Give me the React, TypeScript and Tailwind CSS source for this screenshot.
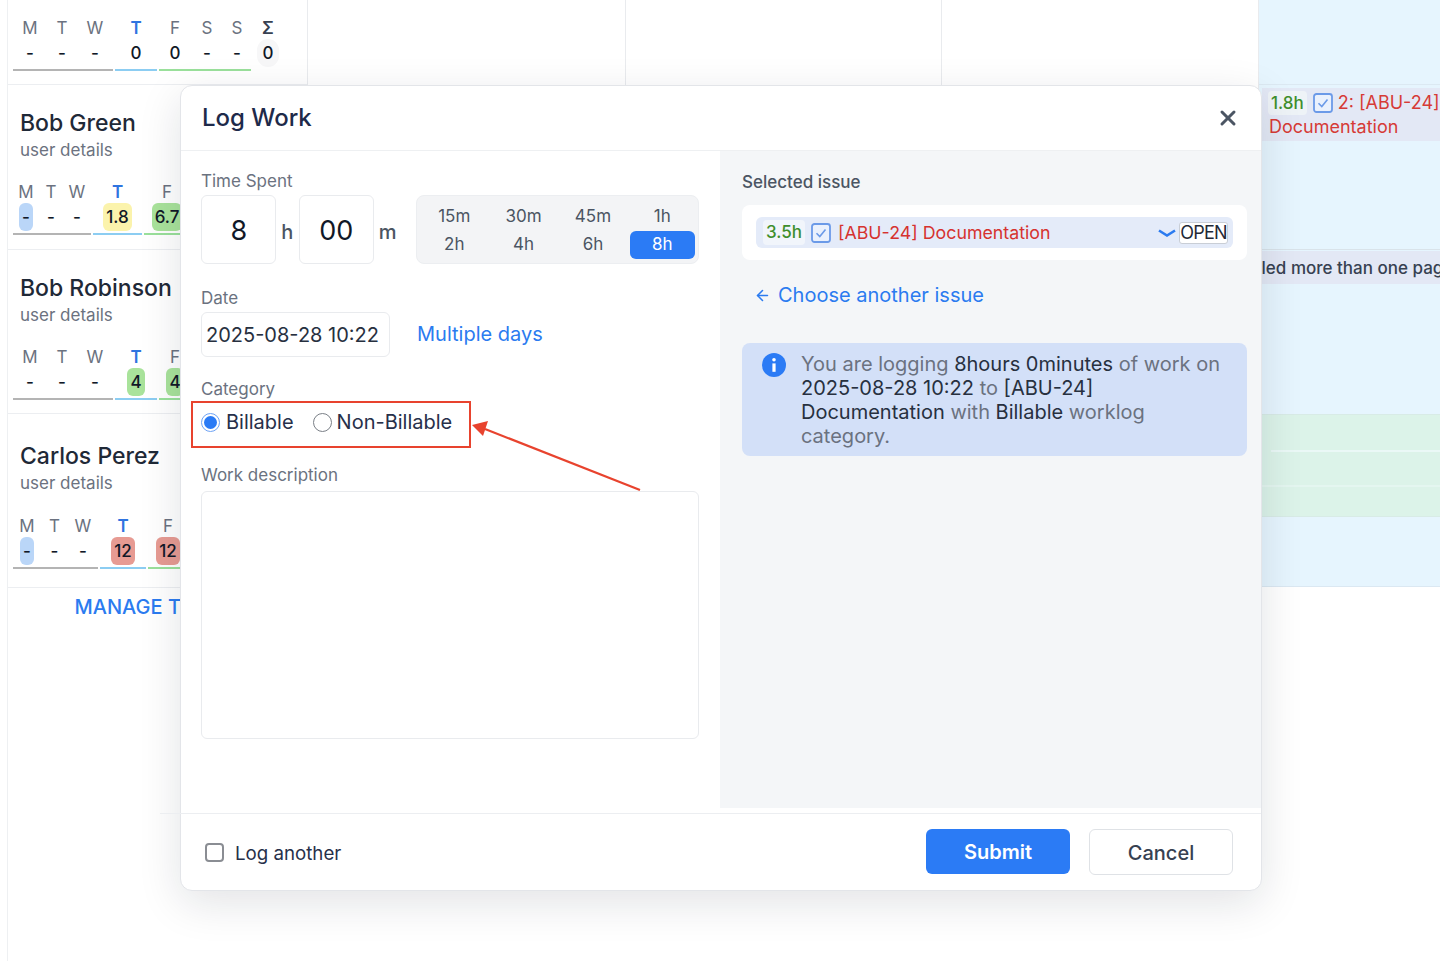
import React from 'react';
import { ArrowLeft, X } from 'lucide-react';

type Cell = { label: string; value: string; width: number; chip?: string };
type Group = { line: string; width: number; cells: Cell[]; today?: boolean };

const GRAY = 'border-[#b4b4b4]';
const BLUE = 'border-[#8ccdf2]';
const GREEN = 'border-[#9ae09b]';

const startOfWeek: Group = {
  line: GRAY,
  width: 100,
  cells: [
    { label: 'M', value: '-', width: 34 },
    { label: 'T', value: '-', width: 30 },
    { label: 'W', value: '-', width: 36 },
  ],
};

const WeekRow = ({ groups, total }: { groups: Group[]; total?: string }) => (
  <div className="flex items-start">
    <div className="flex gap-[2px]">
      {groups.map((group, i) => (
        <div key={i} className={`border-b-2 ${group.line} pb-[2px]`} style={{ width: group.width }}>
          <div className="flex">
            {group.cells.map((cell, j) => (
              <div key={j} className="flex flex-col items-center" style={{ width: cell.width }}>
                <span
                  className={
                    group.today
                      ? 'h-5 text-[17px] leading-5 font-semibold text-[#2f74e0]'
                      : 'h-5 text-[17px] leading-5 text-[#6b7280]'
                  }
                >
                  {cell.label}
                </span>
                <span
                  className={`mt-[1px] flex h-7 items-center justify-center rounded-md px-[3px] pt-[1px] text-[17px] font-medium text-[#111827] ${cell.chip ?? ''}`}
                >
                  {cell.value}
                </span>
              </div>
            ))}
          </div>
        </div>
      ))}
    </div>
    {total && (
      <div className="ml-[6px] flex w-[22px] flex-col items-center">
        <span className="h-5 text-[17px] leading-5 font-semibold text-[#374151]">Σ</span>
        <span className="mt-[1px] flex h-7 w-[22px] items-center justify-center rounded-full bg-[#f7f7f8] pt-[1px] text-[17px] font-medium text-[#111827]">
          {total}
        </span>
      </div>
    )}
  </div>
);

const UserRow = ({
  name,
  top,
  gap,
  bottom,
  groups,
}: {
  name: string;
  top: string;
  gap: string;
  bottom: string;
  groups: Group[];
}) => (
  <div className={`border-b border-[#eceef1] px-[5px] ${top} ${bottom}`}>
    <div className="ml-[7px] h-[30px] text-[23px] leading-[30px] font-medium whitespace-nowrap text-[#1f2937]">{name}</div>
    <div className="ml-[7px] h-6 text-[17px] leading-6 text-[#6b7280]">user details</div>
    <div className={gap}>
      <WeekRow groups={groups} />
    </div>
  </div>
);

const IssueCheck = () => (
  <svg width="20" height="20" viewBox="0 0 20 20" fill="none" className="shrink-0">
    <rect x="1" y="1" width="18" height="18" rx="2.5" fill="#eaf1fd" stroke="#6b9ae8" strokeWidth="1.8" />
    <path d="M5.5 10.2 8.8 13.5 14.5 6.5" stroke="#6b9ae8" strokeWidth="1.6" fill="none" />
  </svg>
);

const presets = ['15m', '30m', '45m', '1h', '2h', '4h', '6h', '8h'];

const App = () => {
  return (
    <div className="relative h-[961px] w-[1440px] overflow-hidden bg-white font-['Inter',sans-serif]">
      {/* timesheet behind the dialog */}
      <div className="flex h-[961px]">
        <div className="ml-[7px] h-full w-[301px] shrink-0 border-l border-[#eef0f2]">
          <div className="h-[587px] border-r border-[#e9ebee]">
            <div className="h-[85px] border-b border-[#eceef1] px-[5px] pt-[18px]">
              <WeekRow
                total="0"
                groups={[
                  startOfWeek,
                  { line: BLUE, width: 42, today: true, cells: [{ label: 'T', value: '0', width: 42 }] },
                  {
                    line: GREEN,
                    width: 92,
                    cells: [
                      { label: 'F', value: '0', width: 32 },
                      { label: 'S', value: '-', width: 32 },
                      { label: 'S', value: '-', width: 28 },
                    ],
                  },
                ]}
              />
            </div>
            <UserRow
              name="Bob Green"
              top="pt-[23px]"
              gap="mt-[20px]"
              bottom="pb-[14px]"
              groups={[
                {
                  line: GRAY,
                  width: 78,
                  cells: [
                    { label: 'M', value: '-', width: 26, chip: 'bg-[#bad6f8]' },
                    { label: 'T', value: '-', width: 24 },
                    { label: 'W', value: '-', width: 28 },
                  ],
                },
                { line: BLUE, width: 49, today: true, cells: [{ label: 'T', value: '1.8', width: 49, chip: 'bg-[#fbf3ac]' }] },
                { line: GREEN, width: 46, cells: [{ label: 'F', value: '6.7', width: 46, chip: 'bg-[#a9e39b]' }] },
              ]}
            />
            <UserRow
              name="Bob Robinson"
              top="pt-[23px]"
              gap="mt-[20px]"
              bottom="pb-[13px]"
              groups={[
                startOfWeek,
                { line: BLUE, width: 42, today: true, cells: [{ label: 'T', value: '4', width: 42, chip: 'bg-[#a9e39b]' }] },
                { line: GREEN, width: 32, cells: [{ label: 'F', value: '4', width: 32, chip: 'bg-[#a9e39b]' }] },
              ]}
            />
            <UserRow
              name="Carlos Perez"
              top="pt-[27px]"
              gap="mt-[21px]"
              bottom="pb-[18px]"
              groups={[
                {
                  line: GRAY,
                  width: 85,
                  cells: [
                    { label: 'M', value: '-', width: 28, chip: 'bg-[#bad6f8]' },
                    { label: 'T', value: '-', width: 27 },
                    { label: 'W', value: '-', width: 30 },
                  ],
                },
                { line: BLUE, width: 46, today: true, cells: [{ label: 'T', value: '12', width: 46, chip: 'bg-[#e79b93]' }] },
                { line: GREEN, width: 40, cells: [{ label: 'F', value: '12', width: 40, chip: 'bg-[#e79b93]' }] },
              ]}
            />
          </div>
          <div className="pt-[8px] pr-[16px] text-center text-[20px] leading-6 font-medium text-[#2b7bf0]">MANAGE TEAM</div>
        </div>
        <div className="h-[587px] w-[318px] shrink-0 border-r border-[#e9ebee]" />
        <div className="h-[587px] w-[316px] shrink-0 border-r border-[#e9ebee]" />
        <div className="h-[587px] w-[317px] shrink-0 border-r border-[#e9ebee]" />
        <div className="flex h-[587px] flex-1 flex-col overflow-hidden border-b border-[#dbe8f2] bg-[#e6f5fe]">
          <div className="h-[85px] shrink-0 border-b border-[#dce9f2]" />
          <div className="mt-[3px] ml-[3px] flex h-[53px] shrink-0 flex-col bg-[#e3e8f5] text-[18px] leading-6 text-[#d63a36]">
            <div className="mt-[3px] flex items-center whitespace-nowrap">
              <span className="ml-[6px] rounded bg-[#eef3f7] px-[3px] text-[17px] font-medium text-[#3f8f2c]">1.8h</span>
              <span className="mr-[5px] ml-[6px]">
                <IssueCheck />
              </span>
              <span>2: [ABU-24]</span>
            </div>
            <div className="ml-[7px] whitespace-nowrap">Documentation</div>
          </div>
          <div className="mt-[108px] h-[36px] shrink-0 border-t border-[#d9e3ea] pt-[1px]">
            <div className="flex h-[33px] items-center bg-[#e3e8f5] pt-[2px] pl-[4px] text-[17px] font-medium whitespace-nowrap text-[#374151]">
              <span className="-ml-[20px]">Filled more than one page</span>
            </div>
          </div>
          <div className="mt-[129px] flex h-[103px] shrink-0 flex-col border-y border-[#d8ebe6] bg-[#dcf3e9]">
            <div className="mt-[35px] ml-[12px] h-[2px] bg-[#eaf8f6]" />
            <div className="mt-[33px] h-[2px] bg-[#e4f6f0]" />
          </div>
        </div>
      </div>

      {/* Log Work dialog */}
      <div className="absolute top-[85px] left-[180px] flex h-[806px] w-[1082px] flex-col rounded-xl border border-[#e3e5e9] bg-white text-[#1f2937] shadow-[0_12px_44px_rgba(15,23,42,0.12)]">
        <div className="flex h-[65px] shrink-0 items-center justify-between border-b border-[#eef0f2] pr-[21px] pl-[21px]">
          <h2 className="text-[24px] font-medium text-[#1e2a4a]">Log Work</h2>
          <X size={24} strokeWidth={3} className="text-[#4b5563]" />
        </div>

        <div className="flex h-[657px] shrink-0">
          {/* left side: the form */}
          <div className="w-[539px] shrink-0 pt-[18px] pr-[21px] pl-[20px]">
            <div className="h-6 text-[17px] leading-6 text-[#6b7280]">Time Spent</div>
            <div className="mt-[2px] flex h-[69px] items-stretch">
              <div className="flex w-[75px] items-center justify-center rounded-md border border-[#e9ebee] pt-[3px] pl-[1px] text-[27px] text-[#111827]">8</div>
              <div className="flex w-[23px] items-center justify-center pt-[4px] text-[20px] font-medium text-[#4b5563]">h</div>
              <div className="flex w-[75px] items-center justify-center rounded-md border border-[#e9ebee] pt-[3px] text-[27px] text-[#111827]">00</div>
              <div className="flex w-[28px] items-center justify-center pt-[4px] text-[20px] font-medium text-[#4b5563]">m</div>
              <div className="ml-[14px] grid w-[284px] grid-cols-4 grid-rows-2 rounded-lg border border-[#eceef1] bg-[#f3f4f6] pt-[6px] pr-[1px] pb-[4px] pl-[3px]">
                {presets.map((preset) => (
                  <div
                    key={preset}
                    className={
                      preset === '8h'
                        ? 'mx-[2px] flex items-center justify-center rounded-md bg-[#2b7bf5] text-[17px] text-white'
                        : 'flex items-center justify-center text-[17px] text-[#4b5563]'
                    }
                  >
                    {preset}
                  </div>
                ))}
              </div>
            </div>

            <div className="mt-[22px] h-6 text-[17px] leading-6 text-[#6b7280]">Date</div>
            <div className="mt-[2px] flex items-center">
              <div className="flex h-[45px] w-[189px] items-center rounded-md border border-[#e9ebee] pl-[4px] text-[20px] whitespace-nowrap text-[#27303f]">
                2025-08-28 10:22
              </div>
              <span className="ml-[27px] -translate-y-[1px] text-[20px] text-[#2b7bf0]">Multiple days</span>
            </div>

            <div className="mt-[20px] h-6 text-[17px] leading-6 text-[#6b7280]">Category</div>
            <div className="mt-[9px] flex h-6 items-center text-[20px] text-[#27304a]">
              <span className="flex h-[19px] w-[19px] items-center justify-center rounded-full border-[1.5px] border-[#6ea3f5]">
                <span className="h-[13px] w-[13px] rounded-full bg-[#2b7bf5]" />
              </span>
              <span className="ml-[6px]">Billable</span>
              <span className="ml-[19px] h-[19px] w-[19px] rounded-full border-[1.5px] border-[#7a7f87]" />
              <span className="ml-[5px]">Non-Billable</span>
            </div>

            <div className="mt-[29px] h-6 text-[17px] leading-6 text-[#6b7280]">Work description</div>
            <div className="mt-[4px] h-[248px] rounded-md border border-[#e9ebee]" />
          </div>

          {/* right side: the chosen issue */}
          <div className="flex-1 bg-[#f4f6f8] pt-[19px] pr-[14px] pl-[22px]">
            <div className="h-6 text-[17px] leading-6 font-medium text-[#4b5563]">Selected issue</div>
            <div className="mt-[11px] rounded-lg bg-white px-[14px] py-[12px]">
              <div className="flex h-[31px] items-center rounded-md bg-[#e4ebf9] pr-[5px] pl-[7px]">
                <span className="rounded bg-[#f1f5fb] px-[3px] text-[17px] font-medium text-[#3f8f2c]">3.5h</span>
                <span className="ml-[6px]">
                  <IssueCheck />
                </span>
                <span className="ml-[7px] pt-[2px] text-[17.8px] text-[#d6322f]">[ABU-24] Documentation</span>
                <svg width="18" height="10" viewBox="0 0 18 10" fill="none" className="mr-[3px] ml-auto">
                  <path d="M1 2.5 9 7.5 17 2.5" stroke="#2b7bf0" strokeWidth="2.6" />
                </svg>
                <span className="flex h-[22px] w-[49px] items-center justify-center rounded-[3px] border border-[#c9ced6] bg-white text-[18px] tracking-[-0.8px] text-[#1f2937]">
                  OPEN
                </span>
              </div>
            </div>
            <div className="mt-[23px] flex h-6 items-center pl-[12px] text-[20px] text-[#2b7bf0]">
              <ArrowLeft size={17} strokeWidth={2.2} />
              <span className="ml-[7px]">Choose another issue</span>
            </div>
            <div className="mt-[36px] flex rounded-lg bg-[#d3e0f8] pt-[9px] pr-[20px] pb-[8px] pl-[20px] text-[20px] leading-6 whitespace-nowrap text-[#6b7280]">
              <svg width="24" height="24" viewBox="0 0 24 24" className="mt-[1px] shrink-0">
                <circle cx="12" cy="12" r="12" fill="#2b7bf5" />
                <circle cx="12" cy="6.8" r="1.8" fill="#fff" />
                <rect x="10.4" y="10.4" width="3.2" height="8.4" fill="#fff" />
              </svg>
              <div className="ml-[15px]">
                <div>
                  You are logging <span className="text-[#27303f]">8hours 0minutes</span> of work on
                </div>
                <div>
                  <span className="text-[#27303f]">2025-08-28 10:22</span> to <span className="text-[#27303f]">[ABU-24]</span>
                </div>
                <div>
                  <span className="text-[#27303f]">Documentation</span> with <span className="text-[#27303f]">Billable</span> worklog
                </div>
                <div>category.</div>
              </div>
            </div>
          </div>
        </div>

        <div className="relative mt-[5px] flex flex-1 items-center border-t border-[#eceef1] pr-[28px] pl-[24px]">
          <span className="absolute -top-[1px] -left-[21px] h-[1px] w-[21px] bg-[#eceef1]" />
          <span className="h-[19px] w-[19px] rounded-[4px] border-2 border-[#8a8d93]" />
          <span className="ml-[11px] pt-[4px] text-[18.7px] text-[#27304a]">Log another</span>
          <button className="mb-[1px] ml-auto flex h-[45px] w-[144px] items-center justify-center rounded-md bg-[#2b7bf5] text-[20px] font-semibold text-white">
            Submit
          </button>
          <button className="ml-[19px] flex h-[46px] w-[144px] items-center justify-center rounded-md border border-[#dfe2e6] bg-white pt-[2px] text-[20px] font-medium text-[#374151]">
            Cancel
          </button>
        </div>
      </div>

      {/* annotation drawn on top of the screenshot */}
      <div className="absolute top-[401px] left-[191px] h-[47px] w-[280px] border-[2.5px] border-[#e8432e]" />
      <svg className="absolute top-[415px] left-[465px]" width="185" height="85" viewBox="0 0 185 85" fill="none">
        <path d="M175 75 20 14" stroke="#e8432e" strokeWidth="2.2" />
        <path d="M7 10 23 6 18 21Z" fill="#e8432e" />
      </svg>
    </div>
  );
};

export default App;
